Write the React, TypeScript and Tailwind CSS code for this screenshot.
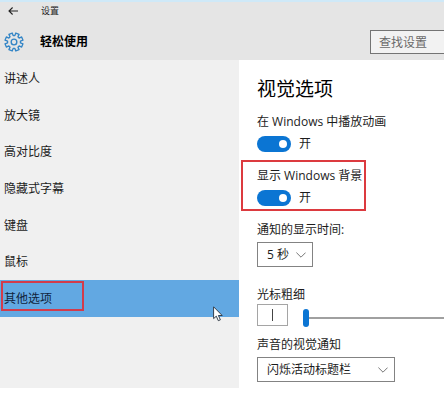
import React, { useState } from "react";

const navItems = [
  "讲述人",
  "放大镜",
  "高对比度",
  "隐藏式字幕",
  "键盘",
  "鼠标",
  "其他选项",
];

// eight-tooth gear outline, generated once around (12, 12)
const gearPath = (() => {
  const point = (radius: number, degrees: number) => {
    const angle = (degrees * Math.PI) / 180;
    return `${(12 + radius * Math.cos(angle)).toFixed(2)} ${(
      12 +
      radius * Math.sin(angle)
    ).toFixed(2)}`;
  };
  const points: string[] = [];
  for (let i = 0; i < 8; i++) {
    const a = i * 45 + 22.5;
    points.push(point(7.8, a - 15), point(11, a - 11));
    points.push(point(11, a + 11), point(7.8, a + 15));
  }
  return `M${points.join("L")}Z`;
})();

const GearIcon = () => (
  <svg
    viewBox="0 0 24 24"
    className="size-5 text-[#3385c6]"
    fill="none"
    stroke="currentColor"
    strokeWidth="1.6"
    strokeLinejoin="round"
  >
    <path d={gearPath} />
    <circle cx="12" cy="12" r="3.4" />
  </svg>
);

const BackIcon = () => (
  <svg
    viewBox="0 0 10 8"
    className="h-2 w-2.5"
    fill="none"
    stroke="#222"
    strokeWidth="1.1"
  >
    <path d="M10 4H1M4.6 0.5L1 4l3.6 3.5" />
  </svg>
);

const Pointer = () => (
  <svg
    viewBox="0 0 10 16"
    className="absolute left-[213px] bottom-[-5px] z-10 h-4 w-2.5"
  >
    <path
      d="M0.6 0.8V12.6L3.3 10.2L5.3 14.7L7.4 13.8L5.4 9.5H9.2Z"
      fill="#fff"
      stroke="#26303c"
      strokeWidth="0.9"
      strokeLinejoin="round"
    />
  </svg>
);

const Toggle: React.FC<{ id: string; label: string }> = ({ id, label }) => {
  const [checked, setChecked] = useState<boolean>(true);

  return (
    <div>
      <label htmlFor={id} className="block">
        {label}
      </label>
      <div className="mt-1.5 flex h-4 items-center gap-2">
        <input
          id={id}
          type="checkbox"
          role="switch"
          checked={checked}
          onChange={(e) => setChecked(e.target.checked)}
          className="flex h-4 w-[34px] appearance-none items-center rounded-full bg-[#999] px-1 before:size-2 before:rounded-full before:bg-white checked:justify-end checked:bg-[#0b75d3]"
        />
        <span>{checked ? "开" : "关"}</span>
      </div>
    </div>
  );
};

const Dropdown: React.FC<{
  id: string;
  label: string;
  options: string[];
  width: string;
}> = ({ id, label, options, width }) => (
  <div>
    <label htmlFor={id} className="block">
      {label}
    </label>
    <div className={`relative mt-1 ${width}`}>
      <select
        id={id}
        className="block h-[25px] w-full appearance-none border border-[#838383] bg-white pl-[9px] outline-none"
      >
        {options.map((option) => (
          <option key={option}>{option}</option>
        ))}
      </select>
      <svg
        viewBox="0 0 10 6"
        className="pointer-events-none absolute top-2.5 right-[7px] h-1.5 w-2.5"
        fill="none"
        stroke="#666"
        strokeWidth="0.9"
      >
        <path d="M0.4 0.6L5 5.2L9.6 0.6" />
      </svg>
    </div>
  </div>
);

export default function App() {
  const [selected, setSelected] = useState<string>("其他选项");
  const [thickness, setThickness] = useState<number>(1);

  return (
    <div className="overflow-hidden bg-white font-['Open_Sans','Noto_Sans_CJK_SC',sans-serif] text-xs text-[#1c1c1c]">
      <header className="h-[60px] border-t-2 border-[#cfe9f8] bg-[#e5e5e5]">
        <div className="flex h-[18px] items-center text-[9px]">
          <button type="button" aria-label="返回" className="mr-[23px] ml-2">
            <BackIcon />
          </button>
          <span>设置</span>
        </div>
        <div className="flex h-11 items-center pl-1">
          <GearIcon />
          <h1 className="ml-4 font-bold text-black">轻松使用</h1>
          <input
            type="search"
            aria-label="查找设置"
            placeholder="查找设置"
            className="ml-auto h-6 w-[74px] border border-r-0 border-[#747474] bg-[#f2f2f2] pl-2 outline-none placeholder:text-[#6a6a6a]"
          />
        </div>
      </header>

      <div className="flex">
        <nav className="w-[239px] shrink-0 bg-[#f0f0f0] pt-px">
          <div className="relative grid h-64 grid-rows-7">
            {navItems.map((item) => (
              <button
                key={item}
                type="button"
                onClick={() => setSelected(item)}
                className={`relative pl-1 text-left ${
                  selected === item ? "bg-[#62a8e2] text-[#10243c]" : ""
                }`}
              >
                {item}
              </button>
            ))}
            <div className="pointer-events-none absolute bottom-1.5 left-px h-[30px] w-[83px] border-2 border-[#d23b4b]" />
            <Pointer />
          </div>
        </nav>

        <main className="min-w-0 flex-1 pt-4 pb-1.5 pl-[18px] leading-4">
          <h2 className="text-[19px] leading-[26px] text-black">视觉选项</h2>
          <div className="mt-3">
            <Toggle id="animation" label="在 Windows 中播放动画" />
          </div>
          <div className="relative mt-4">
            <Toggle id="background" label="显示 Windows 背景" />
            <div className="pointer-events-none absolute -top-2 -left-4 h-[51px] w-[125px] border-2 border-[#dc3a3f]" />
          </div>
          <div className="mt-4">
            <Dropdown
              id="duration"
              label="通知的显示时间:"
              options={["5 秒", "7 秒", "15 秒", "30 秒"]}
              width="w-14"
            />
          </div>
          <div className="mt-5">
            <label htmlFor="thickness" className="block">
              光标粗细
            </label>
            <div className="flex h-6 items-end">
              <div className="flex h-[22px] w-[31px] shrink-0 items-center justify-center self-center border border-[#a5a5a5]">
                <div
                  className="h-3 bg-[#444]"
                  style={{ width: thickness }}
                />
              </div>
              <input
                id="thickness"
                type="range"
                min={1}
                max={20}
                value={thickness}
                onChange={(e) => setThickness(Number(e.target.value))}
                className="ml-[15px] h-[18px] min-w-0 flex-1 appearance-none bg-transparent [&::-webkit-slider-runnable-track]:h-0.5 [&::-webkit-slider-runnable-track]:bg-[#a0a0a0] [&::-webkit-slider-thumb]:-mt-2 [&::-webkit-slider-thumb]:h-[18px] [&::-webkit-slider-thumb]:w-1.5 [&::-webkit-slider-thumb]:appearance-none [&::-webkit-slider-thumb]:rounded-full [&::-webkit-slider-thumb]:bg-[#0b75d3]"
              />
            </div>
          </div>
          <div className="mt-2.5">
            <Dropdown
              id="sound"
              label="声音的视觉通知"
              options={["闪烁活动标题栏", "闪烁活动窗口", "闪烁整个屏幕"]}
              width="w-[138px]"
            />
          </div>
        </main>
      </div>
    </div>
  );
}
